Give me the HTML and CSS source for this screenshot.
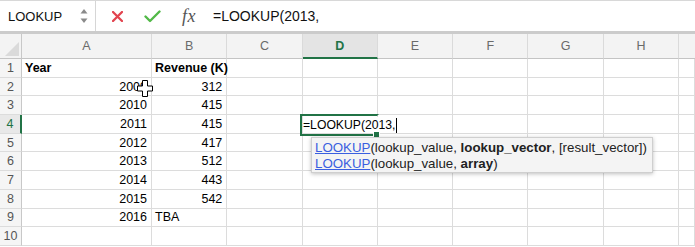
FILE: index.html
```html
<!DOCTYPE html>
<html>
<head>
<meta charset="utf-8">
<link rel="stylesheet" href="styles.css">
</head>
<body>
<div class="toolbar">
  <div class="namebox">
    <span class="name">LOOKUP</span>
    <svg class="spin" width="8" height="16" viewBox="0 0 8 16"><path d="M4 1 L7.5 5.5 L0.5 5.5 Z" fill="#8a8a8a"/><path d="M4 15 L7.5 10.5 L0.5 10.5 Z" fill="#8a8a8a"/></svg>
  </div>
  <div class="fbar">
    <svg class="ic-x" width="11" height="11" viewBox="0 0 11 11"><path d="M1 1 L10 10 M10 1 L1 10" stroke="#e2444f" stroke-width="2.3" stroke-linecap="round"/></svg>
    <svg class="ic-check" width="17" height="13" viewBox="0 0 17 13"><path d="M1.5 6.5 L6 11 L15.5 1.5" stroke="#52b948" stroke-width="2.4" fill="none" stroke-linecap="round" stroke-linejoin="round"/></svg>
    <span class="fx">fx</span>
    <span class="formula">=LOOKUP(2013,</span>
  </div>
</div>
<div class="sheet">
  <div class="grid">
    <div class="ch corner"></div><div class="ch">A</div><div class="ch">B</div><div class="ch">C</div><div class="ch sel">D</div><div class="ch">E</div><div class="ch">F</div><div class="ch">G</div><div class="ch">H</div><div class="ch last"></div>

    <div class="rh">1</div><div class="c b">Year</div><div class="c b">Revenue (K)</div><div class="c"></div><div class="c"></div><div class="c"></div><div class="c"></div><div class="c"></div><div class="c"></div><div class="c"></div>
    <div class="rh">2</div><div class="c n">2009</div><div class="c n">312</div><div class="c"></div><div class="c"></div><div class="c"></div><div class="c"></div><div class="c"></div><div class="c"></div><div class="c"></div>
    <div class="rh">3</div><div class="c n">2010</div><div class="c n">415</div><div class="c"></div><div class="c"></div><div class="c"></div><div class="c"></div><div class="c"></div><div class="c"></div><div class="c"></div>
    <div class="rh sel">4</div><div class="c n">2011</div><div class="c n">415</div><div class="c"></div><div class="c"></div><div class="c"></div><div class="c"></div><div class="c"></div><div class="c"></div><div class="c"></div>
    <div class="rh">5</div><div class="c n">2012</div><div class="c n">417</div><div class="c"></div><div class="c"></div><div class="c"></div><div class="c"></div><div class="c"></div><div class="c"></div><div class="c"></div>
    <div class="rh">6</div><div class="c n">2013</div><div class="c n">512</div><div class="c"></div><div class="c"></div><div class="c"></div><div class="c"></div><div class="c"></div><div class="c"></div><div class="c"></div>
    <div class="rh">7</div><div class="c n">2014</div><div class="c n">443</div><div class="c"></div><div class="c"></div><div class="c"></div><div class="c"></div><div class="c"></div><div class="c"></div><div class="c"></div>
    <div class="rh">8</div><div class="c n">2015</div><div class="c n">542</div><div class="c"></div><div class="c"></div><div class="c"></div><div class="c"></div><div class="c"></div><div class="c"></div><div class="c"></div>
    <div class="rh">9</div><div class="c n">2016</div><div class="c">TBA</div><div class="c"></div><div class="c"></div><div class="c"></div><div class="c"></div><div class="c"></div><div class="c"></div><div class="c"></div>
    <div class="rh">10</div><div class="c"></div><div class="c"></div><div class="c"></div><div class="c"></div><div class="c"></div><div class="c"></div><div class="c"></div><div class="c"></div><div class="c"></div>
  </div>

  <div class="active">
    <span class="edit">=LOOKUP(2013,<span class="caret"></span></span>
    <span class="handle"></span>
  </div>

  <div class="tip">
    <div class="tline"><span class="fn">LOOKUP</span>(lookup_value, <b>lookup_vector</b>, [result_vector])</div>
    <div class="tline"><span class="fn">LOOKUP</span>(lookup_value, <b>array</b>)</div>
  </div>

  <svg class="cursor" width="16" height="17" viewBox="0 0 16 17"><path d="M5.5 0.5 H10.5 V6 H15.5 V11 H10.5 V16.5 H5.5 V11 H0.5 V6 H5.5 Z" fill="#fff" stroke="#000" stroke-width="1"/></svg>
</div>
</body>
</html>
```

FILE: styles.css
```css
html, body {
  margin: 0;
  padding: 0;
  background: #fff;
  overflow: hidden;
}
body {
  width: 695px;
  height: 247px;
  font-family: "Liberation Sans", Arial, sans-serif;
}

.toolbar {
  display: flex;
  height: 30px;
  border-top: 1px solid #d8d8d8;
  border-bottom: 3px solid #cbcbcb;
  background: #fff;
}
.namebox {
  display: flex;
  align-items: center;
  border-right: 1px solid #d6d6d6;
  padding-left: 8px;
  box-sizing: border-box;
  width: 96px;
}
.name {
  font-size: 13px;
  color: #111;
}
.spin {
  margin-left: auto;
  margin-right: 7px;
}
.fbar {
  display: flex;
  align-items: center;
  flex: 1;
}
.ic-x {
  margin-left: 16px;
}
.ic-check {
  margin-left: 21px;
}
.fx {
  margin-left: 21px;
  font-family: "Liberation Serif", "Times New Roman", serif;
  font-style: italic;
  font-size: 18px;
  color: #555;
  letter-spacing: 0.5px;
}
.formula {
  margin-left: 17px;
  font-size: 14px;
  color: #111;
}

.sheet {
  position: relative;
}
.grid {
  display: grid;
  grid-template-columns: 22px 130px repeat(7, 75.3px) 1fr;
  grid-template-rows: 25px;
  grid-auto-rows: 18.7px;
}
.ch {
  background: #f3f3f3;
  border-right: 1px solid #dadada;
  border-bottom: 1px solid #c4c4c4;
  box-sizing: border-box;
  display: flex;
  align-items: center;
  justify-content: center;
  font-size: 12.5px;
  color: #6a6a6a;
}
.ch.corner {
  position: relative;
  border-right: 1px solid #c8c8c8;
}
.ch.corner::after {
  content: "";
  position: absolute;
  right: 2px;
  bottom: 2px;
  width: 0;
  height: 0;
  border-left: 14px solid transparent;
  border-bottom: 14px solid #dadada;
}
.ch.sel {
  background: #e4e4e4;
  color: #217346;
  font-weight: bold;
  border-bottom: 2px solid #217346;
}
.ch.last {
  border-right: none;
}
.rh {
  background: #f5f5f5;
  border-right: 1px solid #c8c8c8;
  border-bottom: 1px solid #dcdcdc;
  box-sizing: border-box;
  display: flex;
  align-items: center;
  justify-content: center;
  font-size: 12.5px;
  color: #555;
}
.rh.sel {
  color: #217346;
  background: #e8e8e8;
  border-right: 2px solid #217346;
}
.c {
  border-right: 1px solid #dcdcdc;
  border-bottom: 1px solid #dcdcdc;
  box-sizing: border-box;
  display: flex;
  align-items: center;
  padding: 0 3px;
  font-size: 12.5px;
  color: #000;
  white-space: nowrap;
}
.c.b {
  font-weight: bold;
}
.c.n {
  justify-content: flex-end;
  padding-right: 4px;
}

.active {
  position: absolute;
  left: 300px;
  top: 80px;
  width: 79px;
  height: 22px;
  border: 2px solid #217346;
  box-sizing: border-box;
  border-right-color: transparent;
}
.edit {
  position: absolute;
  left: 1px;
  top: 1px;
  height: 16px;
  display: flex;
  align-items: center;
  font-size: 12.2px;
  color: #000;
  background: #fff;
  white-space: nowrap;
  padding-right: 2px;
}
.caret {
  display: inline-block;
  width: 1px;
  height: 15px;
  background: #000;
  margin-left: 1px;
}
.handle {
  position: absolute;
  right: -3px;
  bottom: -4px;
  width: 5px;
  height: 5px;
  background: #217346;
  border: 1px solid #fff;
}

.tip {
  position: absolute;
  left: 311px;
  top: 103px;
  width: 342px;
  height: 36px;
  box-sizing: border-box;
  padding: 2px 3px;
  background: #f4f4f4;
  border: 1px solid #cfcfcf;
  box-shadow: 0 1px 4px rgba(0,0,0,0.25);
  font-size: 13.3px;
  color: #222;
}
.tline {
  height: 16px;
  line-height: 16px;
  white-space: nowrap;
}
.fn {
  color: #3a5fe0;
  text-decoration: underline;
}

.cursor {
  position: absolute;
  left: 137px;
  top: 46px;
}
```
